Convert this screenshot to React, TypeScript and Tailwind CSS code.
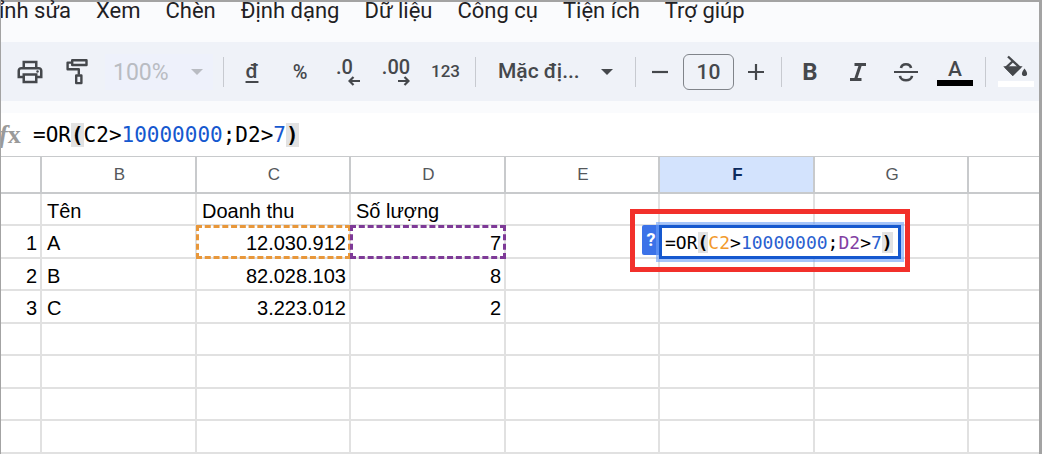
import React from "react";
import { MdOutlinePrint } from "react-icons/md";

const MENUS = ["Xem", "Chèn", "Định dạng", "Dữ liệu", "Công cụ", "Tiện ích", "Trợ giúp"];

const COLUMNS = [
  { letter: "", width: "w-[41px]" },
  { letter: "B", width: "w-[155px]" },
  { letter: "C", width: "w-[154px]" },
  { letter: "D", width: "w-[155px]" },
  { letter: "E", width: "w-[154px]" },
  { letter: "F", width: "w-[155px]" },
  { letter: "G", width: "w-[154px]" },
  { letter: "", width: "w-auto" },
];

const ROWS = [
  ["", "Tên", "Doanh thu", "Số lượng"],
  ["1", "A", "12.030.912", "7"],
  ["2", "B", "82.028.103", "8"],
  ["3", "C", "3.223.012", "2"],
  [],
  [],
  [],
  [],
];

function Divider() {
  return <span className="h-[30px] w-px shrink-0 bg-[#c7cad0]" />;
}

function Caret({ className }: { className: string }) {
  return (
    <svg viewBox="0 0 12 6" className={`pointer-events-none absolute top-1/2 h-[6px] w-[12px] -translate-y-1/2 ${className}`} fill="currentColor" aria-hidden="true">
      <path d="M0 0h12L6 6z" />
    </svg>
  );
}

function Tool({ label, className, children }: { label: string; className: string; children: React.ReactNode }) {
  return (
    <button type="button" aria-label={label} className={`flex h-[36px] shrink-0 items-center justify-center ${className}`}>
      {children}
    </button>
  );
}

function RollerIcon() {
  return (
    <svg viewBox="0 0 22 27" className="h-[27px] w-[22px]" fill="none" stroke="currentColor" strokeWidth="2.4" strokeLinejoin="round" aria-hidden="true">
      <path d="M6.2 2.200h14.3v4.800H6.2zM6.2 4.600H1.600v6.600h11.2v5.6" />
      <path d="M10.200 17.500h5.2v7.6h-5.200z" />
    </svg>
  );
}

function DecimalIcon({ digits, add }: { digits: string; add: boolean }) {
  return (
    <span className="flex flex-col items-start text-[20px] leading-[18px] font-medium">
      <span>{digits}</span>
      <svg viewBox="0 0 12 10" className={add ? "h-[10px] w-[12px] self-end" : "ml-[12px] h-[10px] w-[12px]"} fill="none" stroke="currentColor" strokeWidth="2.2" aria-hidden="true">
        <path d={add ? "M0 5h10.500M6.500 1l4 4-4 4" : "M12 5H1.500M5.500 1l-4 4 4 4"} />
      </svg>
    </span>
  );
}

function Formula({ c, d, num }: { c: string; d: string; num: string }) {
  return (
    <>
      =OR<b className="bg-[#e2e2e2]">(</b>
      <span className={c}>C2</span>&gt;<span className={num}>10000000</span>;<span className={d}>D2</span>&gt;
      <span className={num}>7</span>
      <b className="bg-[#e2e2e2]">)</b>
    </>
  );
}

function Toolbar() {
  return (
    <div role="toolbar" aria-label="Định dạng" className="flex h-[59px] items-center overflow-hidden bg-[#eff2f8] text-[#45484c]">
      <Tool label="In" className="w-[58px]">
        <MdOutlinePrint className="size-[30px]" />
      </Tool>
      <Tool label="Sơn định dạng" className="w-[36px]">
        <RollerIcon />
      </Tool>
      <div className="relative mx-[10px] text-[#b9bcc2]">
        <select aria-label="Thu phóng" disabled className="h-[36px] w-[108px] appearance-none bg-[#eef1fb] pt-[2px] pl-[8px] text-[23px] opacity-100">
          <option>100%</option>
        </select>
        <Caret className="right-[10px]" />
      </div>
      <Divider />
      <Tool label="Định dạng tiền tệ" className="w-[56px] text-[21px] font-medium">
        <span className="underline decoration-2 underline-offset-3">đ</span>
      </Tool>
      <Tool label="Phần trăm" className="w-[40px] text-[20px] font-medium">%</Tool>
      <Tool label="Giảm số thập phân" className="w-[56px]">
        <DecimalIcon digits=".0" add={false} />
      </Tool>
      <Tool label="Tăng số thập phân" className="w-[40px]">
        <DecimalIcon digits=".00" add />
      </Tool>
      <Tool label="Định dạng khác" className="w-[59px] text-[17px] font-medium">123</Tool>
      <Divider />
      <div className="relative">
        <select aria-label="Phông chữ" className="h-[36px] w-[159px] appearance-none pl-[22px] text-[21px] font-medium">
          <option>Mặc đị...</option>
        </select>
        <Caret className="right-[22px]" />
      </div>
      <Divider />
      <Tool label="Giảm cỡ chữ" className="w-[47px]">
        <svg viewBox="0 0 18 18" className="size-[18px]" stroke="currentColor" strokeWidth="2.200" aria-hidden="true"><path d="M1 9h16" /></svg>
      </Tool>
      <input aria-label="Cỡ chữ" defaultValue="10" className="h-[36px] w-[51px] shrink-0 rounded-[6px] border border-[#80848a] text-center text-[21px] font-medium" />
      <Tool label="Tăng cỡ chữ" className="w-[47px] pr-[4px]">
        <svg viewBox="0 0 18 18" className="size-[18px]" stroke="currentColor" strokeWidth="2.200" aria-hidden="true"><path d="M1 9h16M9 1v16" /></svg>
      </Tool>
      <Divider />
      <Tool label="In đậm" className="w-[56px] text-[24px] font-bold">B</Tool>
      <Tool label="In nghiêng" className="w-[40px]">
        <svg viewBox="0 0 18 20" className="h-[20px] w-[18px]" fill="none" stroke="currentColor" strokeWidth="3" aria-hidden="true"><path d="M5.500 2.500H17M1 17.500h11.500M11.500 2.500l-5 15" /></svg>
      </Tool>
      <Tool label="Gạch ngang" className="w-[56px]">
        <svg viewBox="0 0 26 20" className="h-[20px] w-[26px]" fill="none" stroke="currentColor" aria-hidden="true">
          <path d="M1 10h24" strokeWidth="2" />
          <path d="M8 6c.8-5 9.200-5 10 0M7 13.800c.5 6 11.500 6 12 0" strokeWidth="2.600" />
        </svg>
      </Tool>
      <Tool label="Màu chữ" className="w-[42px] flex-col text-[21px] leading-[22px] font-medium">
        <span>A</span>
        <span className="h-[6px] w-[36px] bg-black" />
      </Tool>
      <span className="w-[9px] shrink-0" />
      <Divider />
      <Tool label="Màu nền" className="mr-[5px] ml-auto w-[36px] flex-col">
        <svg viewBox="0 0 26 24" className="h-[24px] w-[26px] overflow-visible" fill="none" stroke="currentColor" strokeWidth="2.400" aria-hidden="true">
          <path d="M5 -.5l11.700 11-6.900 6.700-6.700-6.700L10 4" />
          <path d="M3.100 10.500h13.600l-6.900 6.700z" fill="currentColor" />
          <path d="M21.500 11.500c4 5 2.800 7.500 0 7.500s-4-2.500 0-7.500z" fill="currentColor" stroke="none" />
        </svg>
        <span className="h-[6px] w-[36px] bg-white" />
      </Tool>
    </div>
  );
}

function CellEditor() {
  return (
    <>
      <span className="absolute -top-px -left-[18px] z-10 flex h-[30px] w-[18px] items-center justify-center rounded-l-[2px] bg-[#3b72e8] font-['Roboto',sans-serif] text-[18px] font-bold text-white">?</span>
      <div className="absolute -top-px -left-px z-10 flex h-[34px] w-[242px] items-center border-3 border-[#1558cf] bg-white pt-[2px] pl-[3px] font-['DejaVu_Sans_Mono',monospace] text-[18px] leading-[22px] whitespace-nowrap ring-3 ring-[#6b9ff8]/60">
        <span><Formula c="text-[#f29a2e]" d="text-[#8340a3]" num="text-[#2a5fd0]" /></span>
      </div>
      <div className="absolute -top-[17px] -left-[30px] z-10 h-[63px] w-[280px] border-5 border-[#f2302b]" />
    </>
  );
}

export default function App() {
  return (
    <div className="min-h-screen border-t-2 border-r-3 border-l border-[#a3a3a3] bg-white font-['Roboto',sans-serif] text-black">
      <nav className="flex h-[40px] items-start gap-[25px] bg-[#fafbfd] text-[22px] leading-[18px] text-[#1f2124]">
        <div className="flex w-[70px] shrink-0 justify-end overflow-x-clip">
          <button type="button" className="whitespace-nowrap">Chỉnh sửa</button>
        </div>
        {MENUS.map((m) => (
          <button key={m} type="button" className="whitespace-nowrap">{m}</button>
        ))}
      </nav>
      <Toolbar />
      <div className="h-[12px] bg-[#fafbfd]" />
      <div className="flex h-[43px] items-center overflow-x-clip">
        <span className="-ml-[2px] w-[34px] font-['Liberation_Serif',serif] text-[26px] leading-none font-bold text-[#9a9a9a]"><i>f</i>x</span>
        <div className="font-['DejaVu_Sans_Mono',monospace] text-[21px] leading-[26px] whitespace-nowrap">
          <Formula c="" d="" num="text-[#1558cf]" />
        </div>
      </div>
      <table className="w-full table-fixed border-separate border-spacing-0 font-['Liberation_Sans',sans-serif] text-[20px] leading-[24px]">
        <thead>
          <tr className="h-[38px]">
            {COLUMNS.map((c, i) => (
              <th
                key={i}
                className={`${c.width} border-t border-r-2 border-b-2 border-[#c8cacc] p-0 pl-[2px] text-[17px] last:border-r-0 ${c.letter === "F" ? "bg-[#d3e3fd] font-bold text-[#0b2a5c]" : "font-normal text-[#55585c]"}`}
              >
                {c.letter}
              </th>
            ))}
          </tr>
        </thead>
        <tbody>
          {ROWS.map((row, r) => (
            <tr key={r} className="odd:h-[32px] even:h-[33px]">
              {COLUMNS.map((_, c) => (
                <td
                  key={c}
                  className={`relative border-r-2 border-b-2 border-[#e1e1e1] pt-[5px] pr-[3px] pb-0 pl-[5px] align-top whitespace-nowrap last:border-r-0 ${c === 0 || (c > 1 && r > 0) ? "text-right" : "text-left"}`}
                >
                  {row[c]}
                  {r === 1 && c === 2 && <span className="absolute -top-px -right-[2px] -bottom-[2px] -left-px border-3 border-dashed border-[#e8973a]" />}
                  {r === 1 && c === 3 && <span className="absolute -top-px -right-[2px] -bottom-[2px] -left-px border-3 border-dashed border-[#7e3a97]" />}
                  {r === 1 && c === 5 && <CellEditor />}
                </td>
              ))}
            </tr>
          ))}
        </tbody>
      </table>
    </div>
  );
}
